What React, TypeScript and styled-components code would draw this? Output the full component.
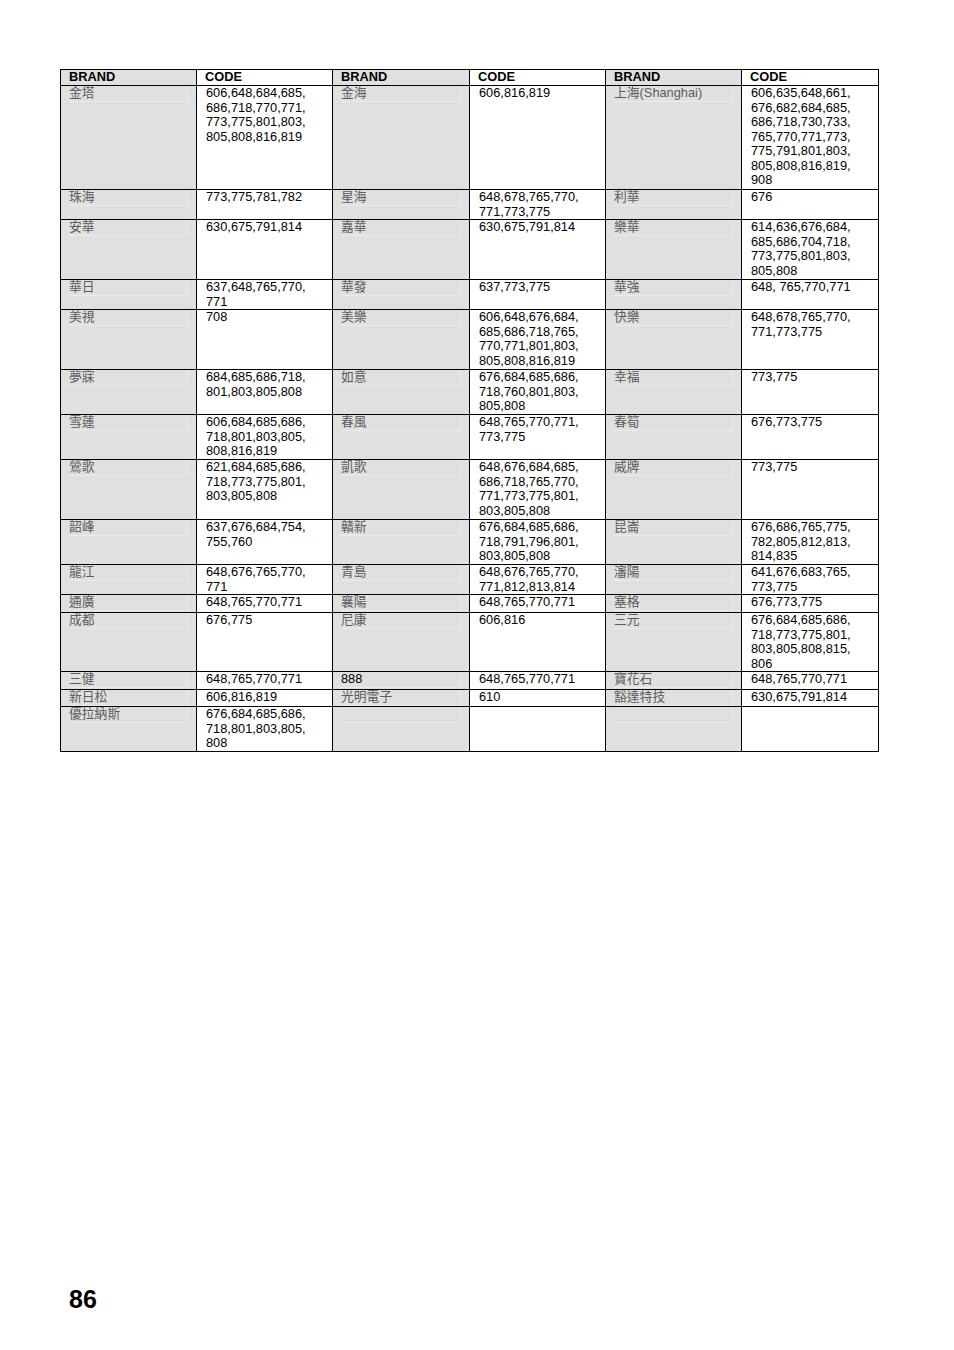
import React from "react";
import styled, { createGlobalStyle } from "styled-components";

const GlobalStyle = createGlobalStyle`
    html, body {
        margin: 0;
        padding: 0;
        background: #fff;
    }
    body {
        font-family: "Liberation Sans", Arial, "Noto Sans CJK TC", sans-serif;
        color: #000;
    }
`

const Page = styled.div`
    position: relative;
    width: 954px;
    height: 1350px;
    box-sizing: border-box;
    padding: 69px 0 0 60px;
    display: flex;
    flex-direction: column;
`
const Table = styled.table`
    border-collapse: collapse;
    table-layout: fixed;
    width: 818px;
    border: 1px solid #000;
`
const Col = styled.col<{ $w: number }>`
    width: ${p => p.$w}px;
`
const Row = styled.tr<{ $h: number }>`
    height: ${p => p.$h}px;
`
const HeadCell = styled.th<{ $brand?: boolean }>`
    border: 1px solid #000;
    background: ${p => (p.$brand ? "#e0e0e0" : "#fff")};
    padding: 0 0 0 8px;
    text-align: left;
    vertical-align: top;
    font-size: 12.8px;
    font-weight: 700;
    line-height: 14.5px;
`
const BrandCell = styled.td`
    border: 1px solid #000;
    background: #e0e0e0;
    padding: 0 8px 0 8px;
    vertical-align: top;
`
const Field = styled.span<{ $dark?: boolean }>`
    display: block;
    height: 16px;
    box-sizing: border-box;
    border-bottom: 1px solid #ebebeb;
    border-right: 1px solid #ebebeb;
    font-family: "Liberation Sans", Arial, "Noto Sans CJK TC", sans-serif;
    font-size: 12.8px;
    line-height: 14.5px;
    color: ${p => (p.$dark ? "#000" : "#5c5c5c")};
    white-space: nowrap;
`
const CodeCell = styled.td`
    border: 1px solid #000;
    background: #fff;
    padding: 0 4px 0 9px;
    vertical-align: top;
    font-size: 12.8px;
    line-height: 14.5px;
    white-space: pre-line;
`
const PageNumber = styled.div`
    margin-top: 532px;
    padding-left: 9px;
    font-size: 25px;
    font-weight: 700;
    line-height: 30px;
`

type Pair = [string, string];
interface Entry {
    h: number;
    pairs: Pair[];
}

const rows: Entry[] = [
    { h: 104, pairs: [
        ["金塔", "606,648,684,685,\n686,718,770,771,\n773,775,801,803,\n805,808,816,819"],
        ["金海", "606,816,819"],
        ["上海(Shanghai)", "606,635,648,661,\n676,682,684,685,\n686,718,730,733,\n765,770,771,773,\n775,791,801,803,\n805,808,816,819,\n908"],
    ] },
    { h: 30, pairs: [
        ["珠海", "773,775,781,782"],
        ["星海", "648,678,765,770,\n771,773,775"],
        ["利華", "676"],
    ] },
    { h: 60, pairs: [
        ["安華", "630,675,791,814"],
        ["嘉華", "630,675,791,814"],
        ["樂華", "614,636,676,684,\n685,686,704,718,\n773,775,801,803,\n805,808"],
    ] },
    { h: 30, pairs: [
        ["華日", "637,648,765,770,\n771"],
        ["華發", "637,773,775"],
        ["華強", "648, 765,770,771"],
    ] },
    { h: 60, pairs: [
        ["美視", "708"],
        ["美樂", "606,648,676,684,\n685,686,718,765,\n770,771,801,803,\n805,808,816,819"],
        ["快樂", "648,678,765,770,\n771,773,775"],
    ] },
    { h: 45, pairs: [
        ["夢寐", "684,685,686,718,\n801,803,805,808"],
        ["如意", "676,684,685,686,\n718,760,801,803,\n805,808"],
        ["幸福", "773,775"],
    ] },
    { h: 45, pairs: [
        ["雪蓮", "606,684,685,686,\n718,801,803,805,\n808,816,819"],
        ["春風", "648,765,770,771,\n773,775"],
        ["春筍", "676,773,775"],
    ] },
    { h: 60, pairs: [
        ["鶯歌", "621,684,685,686,\n718,773,775,801,\n803,805,808"],
        ["凱歌", "648,676,684,685,\n686,718,765,770,\n771,773,775,801,\n803,805,808"],
        ["威牌", "773,775"],
    ] },
    { h: 45, pairs: [
        ["韶峰", "637,676,684,754,\n755,760"],
        ["贛新", "676,684,685,686,\n718,791,796,801,\n803,805,808"],
        ["昆崙", "676,686,765,775,\n782,805,812,813,\n814,835"],
    ] },
    { h: 30, pairs: [
        ["龍江", "648,676,765,770,\n771"],
        ["青島", "648,676,765,770,\n771,812,813,814"],
        ["瀋陽", "641,676,683,765,\n773,775"],
    ] },
    { h: 18, pairs: [
        ["通廣", "648,765,770,771"],
        ["襄陽", "648,765,770,771"],
        ["塞格", "676,773,775"],
    ] },
    { h: 59, pairs: [
        ["成都", "676,775"],
        ["尼康", "606,816"],
        ["三元", "676,684,685,686,\n718,773,775,801,\n803,805,808,815,\n806"],
    ] },
    { h: 18, pairs: [
        ["三健", "648,765,770,771"],
        ["888", "648,765,770,771"],
        ["寶花石", "648,765,770,771"],
    ] },
    { h: 17, pairs: [
        ["新日松", "606,816,819"],
        ["光明電子", "610"],
        ["豁達特技", "630,675,791,814"],
    ] },
    { h: 45, pairs: [
        ["優拉納斯", "676,684,685,686,\n718,801,803,805,\n808"],
        ["", ""],
        ["", ""],
    ] },
];

const widths = [136, 136, 137, 136, 136, 137];

const App = () => {
    return (
        <Page>
            <GlobalStyle />
            <Table>
                <colgroup>
                    {widths.map((w, i) => <Col key={i} $w={w} />)}
                </colgroup>
                <thead>
                    <Row $h={16}>
                        {[0, 1, 2].map(i => (
                            <React.Fragment key={i}>
                                <HeadCell $brand>BRAND</HeadCell>
                                <HeadCell>CODE</HeadCell>
                            </React.Fragment>
                        ))}
                    </Row>
                </thead>
                <tbody>
                    {rows.map((row, r) => (
                        <Row key={r} $h={row.h}>
                            {row.pairs.map(([brand, code], i) => (
                                <React.Fragment key={i}>
                                    <BrandCell>
                                        <Field $dark={/^[0-9]+$/.test(brand)}>{brand}</Field>
                                    </BrandCell>
                                    <CodeCell>{code}</CodeCell>
                                </React.Fragment>
                            ))}
                        </Row>
                    ))}
                </tbody>
            </Table>
            <PageNumber>86</PageNumber>
        </Page>
    );
};

export default App;
